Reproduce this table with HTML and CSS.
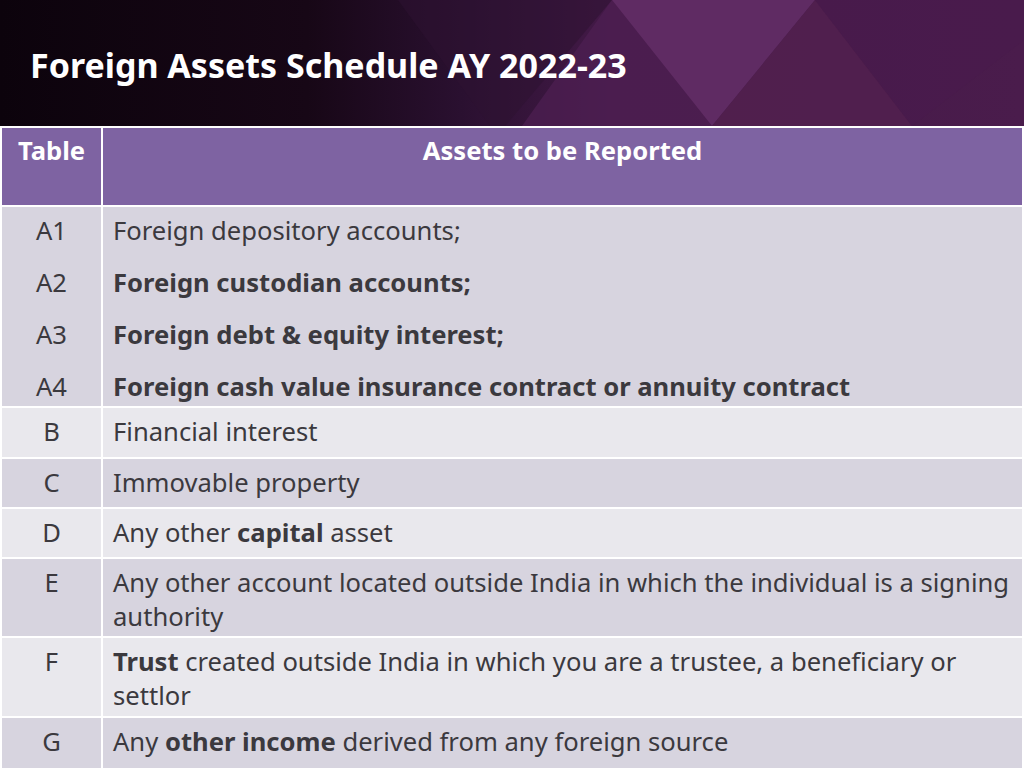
FILE: index.html
```html
<!DOCTYPE html>
<html lang="en">
<head>
<meta charset="utf-8">
<title>Foreign Assets Schedule AY 2022-23</title>
<link rel="stylesheet" href="styles.css">
</head>
<body>
<header class="banner">
  <svg class="banner-bg" viewBox="0 0 1024 126" preserveAspectRatio="none" aria-hidden="true">
    <defs>
      <linearGradient id="bg" x1="0" y1="0" x2="1" y2="0">
        <stop offset="0" stop-color="#0c030c"/>
        <stop offset="0.3" stop-color="#170716"/>
        <stop offset="0.45" stop-color="#2a1030"/>
        <stop offset="0.6" stop-color="#441a48"/>
        <stop offset="1" stop-color="#4a1c4c"/>
      </linearGradient>
    </defs>
    <rect x="0" y="0" width="1024" height="126" fill="url(#bg)"/>
    <polygon points="398,0 612,0 505,126 490,126" fill="#2e1232" opacity="0.55"/>
    <polygon points="612,0 522,126 712,126" fill="#4e1f52" opacity="0.7"/>
    <polygon points="612,0 815,0 712,126" fill="#5f2b63"/>
    <polygon points="815,0 712,126 912,126" fill="#53214f" opacity="0.8"/>
    <polygon points="815,0 1024,0 1024,40 912,126" fill="#4a1b4c" opacity="0.6"/>
  </svg>
  <h1 class="title">Foreign Assets Schedule AY 2022-23</h1>
</header>
<table class="assets">
  <thead>
    <tr class="row-head">
      <th class="col-id">Table</th>
      <th class="col-desc">Assets to be Reported</th>
    </tr>
  </thead>
  <tbody>
    <tr class="row-a dark">
      <td class="col-id">
        <p>A1</p><p>A2</p><p>A3</p><p>A4</p>
      </td>
      <td class="col-desc">
        <p>Foreign depository accounts;</p>
        <p><b>Foreign custodian accounts;</b></p>
        <p><b>Foreign debt &amp; equity interest;</b></p>
        <p><b>Foreign cash value insurance contract or annuity contract</b></p>
      </td>
    </tr>
    <tr class="row-1a light">
      <td class="col-id">B</td>
      <td class="col-desc">Financial interest</td>
    </tr>
    <tr class="row-1b dark">
      <td class="col-id">C</td>
      <td class="col-desc">Immovable property</td>
    </tr>
    <tr class="row-1b light">
      <td class="col-id">D</td>
      <td class="col-desc">Any other <b>capital</b> asset</td>
    </tr>
    <tr class="row-2a dark">
      <td class="col-id">E</td>
      <td class="col-desc">Any other account located outside India in which the individual is a signing authority</td>
    </tr>
    <tr class="row-2b light">
      <td class="col-id">F</td>
      <td class="col-desc"><b>Trust</b> created outside India in which you are a trustee, a beneficiary or settlor</td>
    </tr>
    <tr class="row-1c dark">
      <td class="col-id">G</td>
      <td class="col-desc">Any <b>other income</b> derived from any foreign source</td>
    </tr>
  </tbody>
</table>
</body>
</html>
```

FILE: styles.css
```css
html, body {
  margin: 0;
  padding: 0;
}

body {
  width: 1024px;
  height: 768px;
  overflow: hidden;
  background: #ffffff;
  font-family: "Noto Sans", "Open Sans", "DejaVu Sans", sans-serif;
}

.banner {
  position: relative;
  height: 126px;
  display: flex;
  align-items: center;
  overflow: hidden;
}

.banner-bg {
  position: absolute;
  inset: 0;
  width: 100%;
  height: 100%;
}

.title {
  position: relative;
  margin: 0 0 0 30px;
  padding-top: 4px;
  color: #ffffff;
  font-size: 34px;
  font-weight: 700;
  line-height: 42px;
}

.assets {
  width: 1024px;
  border-collapse: separate;
  border-spacing: 2px;
  background: #ffffff;
  table-layout: fixed;
  color: #3b393e;
  font-size: 25.6px;
  line-height: 34px;
}

.assets th,
.assets td {
  padding: 7px 10px 0 10px;
  vertical-align: top;
  text-align: left;
}

.assets .col-id {
  width: 79px;
  text-align: center;
}

.assets th {
  padding-top: 6px;
  color: #ffffff;
  font-weight: 700;
  background: #7e63a2;
}

.assets th.col-desc {
  text-align: center;
}

.assets p {
  margin: 0 0 18px 0;
}

.assets p:last-child {
  margin-bottom: 0;
}

.assets b {
  font-weight: 700;
}

.dark td {
  background: #d7d4df;
}

.light td {
  background: #e9e8ed;
}

.row-head { height: 77px; }
.row-a { height: 199px; }
.row-1a { height: 49px; }
.row-1b { height: 48px; }
.row-2a { height: 77px; }
.row-2b { height: 78px; }
.row-1c { height: 52px; }
```
